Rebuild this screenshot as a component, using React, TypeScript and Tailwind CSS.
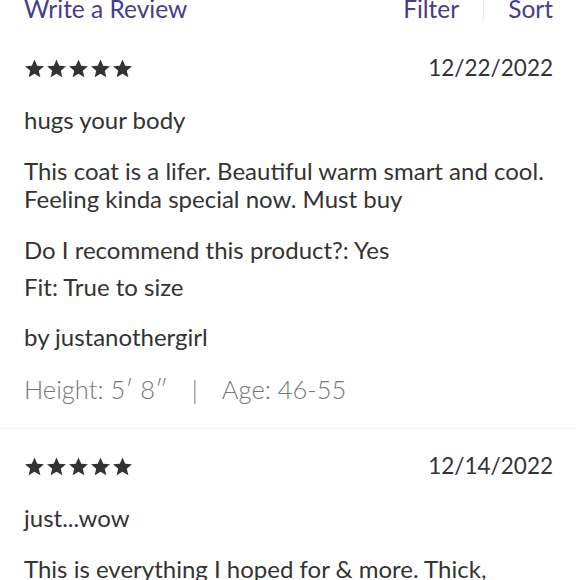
const Star = () => (
  <svg width="21" height="21" viewBox="0 0 24 24" fill="#333333">
    <path d="M12 1.6l3.1 7.2 7.7.6-5.9 5.1 1.8 7.6L12 18.1l-6.7 4 1.8-7.6-5.9-5.1 7.7-.6z" />
  </svg>
);

function Stars() {
  return (
    <div className="flex items-center gap-[1px]">
      {[0, 1, 2, 3, 4].map((i) => (
        <Star key={i} />
      ))}
    </div>
  );
}

function ReviewHead({ date }: { date: string }) {
  return (
    <div className="flex items-center justify-between h-[28px]">
      <Stars />
      <span className="text-[22.5px] leading-[28px] text-[#333]">{date}</span>
    </div>
  );
}

export default function App() {
  return (
    <div
      className="w-[580px] h-[580px] overflow-hidden bg-white text-[#333]"
      style={{ fontFamily: "Lato, 'Open Sans', sans-serif" }}
    >
      {/* Top actions */}
      <div className="flex items-center justify-between pl-6 pr-[27px] -mt-[5px] h-[28px] text-[24.5px] text-[#473d8d]">
        <span>Write a Review</span>
        <div className="flex items-center">
          <span>Filter</span>
          <div className="w-px h-[26px] bg-[#eeeeee] mx-[24px]" />
          <span>Sort</span>
        </div>
      </div>

      {/* First review */}
      <div className="pl-6 pr-[27px] text-[24px] leading-[28px]">
        <div className="mt-[31px]">
          <ReviewHead date="12/22/2022" />
        </div>
        <p className="mt-[24px]">hugs your body</p>
        <p className="mt-[23px]">
          This coat is a lifer. Beautiful warm smart and cool.
          <br />
          Feeling kinda special now. Must buy
        </p>
        <p className="mt-[23px]">Do I recommend this product?: Yes</p>
        <p className="mt-[9px]">Fit: True to size</p>
        <p className="mt-[22px]">by justanothergirl</p>
        <div className="mt-[22px] flex items-center text-[25.5px] leading-[32px] font-light text-[#777]">
          <span>Height: 5′ 8″</span>
          <span className="mx-[24px]">|</span>
          <span>Age: 46-55</span>
        </div>
      </div>

      <div className="mt-[23px] h-px bg-[#f2f2f0] mr-1" />

      {/* Second review */}
      <div className="pl-6 pr-[27px] text-[24px] leading-[28px]">
        <div className="mt-[23px]">
          <ReviewHead date="12/14/2022" />
        </div>
        <p className="mt-[24px]">just...wow</p>
        <p className="mt-[23px]">This is everything I hoped for &amp; more. Thick,</p>
      </div>
    </div>
  );
}
